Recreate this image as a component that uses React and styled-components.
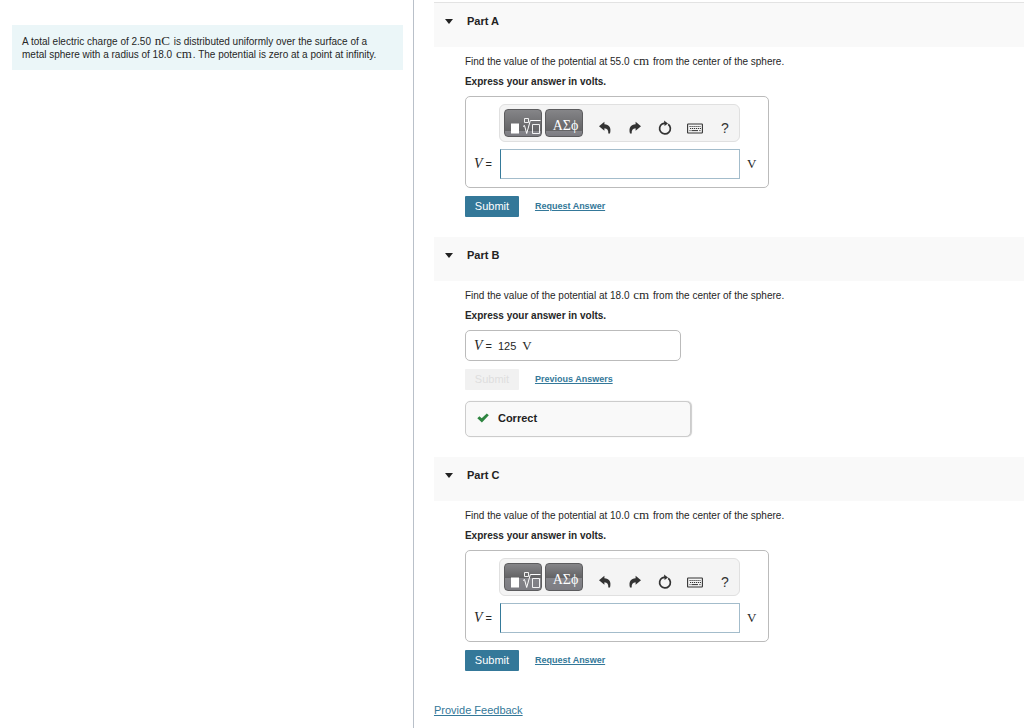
import React from "react";
import styled, { createGlobalStyle } from "styled-components";

const Global = createGlobalStyle`
  *, *::before, *::after { box-sizing: border-box; }
  body { margin: 0; background: #fff; color: #262626; font: 10px/12px "Liberation Sans", Arial, sans-serif; }
  p, h2 { margin: 0; }
  button, input { font-family: inherit; }
`;

const Page = styled.div`
  display: grid;
  grid-template-columns: 19fr 28fr;
  min-height: 100vh;
`;
const Aside = styled.aside`
  padding: 25px 10px 0 12px;
  border-right: 1px solid #b9c0c9;
`;
const Problem = styled.div`
  background: #ebf6f8;
  padding: 10px 20px 9px 10px;
  line-height: 13px;
`;
const Main = styled.main`
  padding: 2px 0 0 20px;
`;
const Header = styled.header`
  display: flex;
  align-items: flex-start;
  height: ${(p) => (p.$first ? 45 : 44)}px;
  padding-top: 11px;
  background: #f9f9f9;
  border-top: ${(p) => (p.$first ? "1px solid #e3e3e3" : "0")};
`;
const Toggle = styled.button`
  display: flex;
  align-items: center;
  gap: 14px;
  padding: 0 0 0 11px;
  border: 0;
  background: none;
  color: #222;
  font-size: 11px;
  font-weight: 700;
  line-height: 14px;
`;
const Body = styled.div`
  padding: 9px 20px 20px 31px;
`;
const Question = styled.p`
  line-height: 12px;
`;
const Instruction = styled.p`
  margin: 8px 0;
  font-weight: 700;
  line-height: 12px;
`;
const Math = styled.span`
  font-family: "Liberation Serif", "Times New Roman", serif;
  font-size: ${(p) => (p.$large ? 14 : 13)}px;
  line-height: 0;
  font-style: ${(p) => (p.$italic ? "italic" : "normal")};
`;
const InlineUnit = styled(Math)`
  margin: 0 1px;
`;
const Box = styled.div`
  max-width: ${(p) => (p.$done ? 216 : 304)}px;
  border: 1px solid #bbb;
  border-radius: 5px;
  padding: ${(p) => (p.$done ? "8px" : "7px 8px 8px")};
`;
const Tools = styled.div`
  display: flex;
  align-items: center;
  height: 38px;
  margin: 0 20px 7px 25px;
  padding: 0 4px;
  gap: 3px;
  background: #f4f4f4;
  border: 1px solid #e0e0e0;
  border-radius: 6px;
`;
const Template = styled.button`
  flex: none;
  width: 38px;
  height: 28px;
  padding: 0;
  border: 1px solid #5c5c5e;
  border-radius: 4px;
  background: linear-gradient(#858588, #636365 ${(p) => p.$band}%, #85858a ${(p) => p.$band}%, #7c7c82);
  color: #fff;
  svg { display: block; }
`;
const Greek = styled.span`
  display: block;
  padding: 6px 0 0 3px;
  font: 14px/18px "Liberation Serif", serif;
`;
const Icons = styled.div`
  display: flex;
  flex: 1;
  gap: 10px;
  padding: 10px 0 0 9px;
`;
const Tool = styled.button`
  display: grid;
  place-items: center;
  flex: none;
  width: 20px;
  height: 20px;
  padding: 0;
  border: 0;
  background: none;
  color: #333;
  font-size: 14px;
  line-height: 20px;
`;
const Field = styled.div`
  display: flex;
  align-items: center;
`;
const Label = styled.label`
  width: 26px;
  font-size: 11px;
  white-space: nowrap;
`;
const Input = styled.input`
  flex: 1;
  min-width: 0;
  height: 30px;
  margin-right: 7px;
  padding: 0 6px;
  border: 1px solid #a3bccb;
  border-left-color: #357a9a;
  font-size: 12px;
`;
const Unit = styled(Math)`
  width: 13px;
`;
const Result = styled.div`
  display: flex;
  align-items: center;
  gap: 6px;
  height: 13px;
  font-size: 11px;
`;
const Actions = styled.div`
  display: flex;
  align-items: center;
  gap: 16px;
  margin-top: 8px;
`;
const Submit = styled.button`
  width: 54px;
  height: 21px;
  padding: 0 0 2px;
  border: 0;
  border-radius: 1px;
  background: #347899;
  color: #fff;
  font-size: 11px;
  &:disabled { background: #f1f1f1; color: #dedede; }
`;
const Link = styled.a`
  padding-bottom: 2px;
  color: #347899;
  font-weight: 700;
  font-size: 9px;
`;
const Feedback = styled.a`
  display: inline-block;
  margin-top: 12px;
  color: #347899;
  font-size: 11px;
  line-height: 14px;
`;
const Correct = styled.div`
  display: flex;
  align-items: center;
  gap: 9px;
  max-width: 226px;
  height: 36px;
  margin-top: 11px;
  padding: 0 0 2px 11px;
  border: 1px solid #ccc;
  border-radius: 5px;
  background: #f9f9f9;
  box-shadow: 1px 0 1px #ccc;
  color: #222;
  font-size: 11px;
  font-weight: 700;
`;

const Arrow = ({ flip }) => (
  <svg width="14" height="14" viewBox="0 0 14 14" fill="currentColor" aria-hidden="true">
    <path transform={flip ? "translate(14 0) scale(-1 1)" : undefined}
      d="M1 5.2 6.4.8v2.5C11 3.5 13.6 6.5 12 12.6H10.3C10.6 9.2 9.4 7.3 6.4 7.2v2.6Z" />
  </svg>
);
const Reset = () => (
  <svg width="14" height="16" viewBox="0 0 14 16" aria-hidden="true">
    <path d="M10.2 4.2A5.4 5.4 0 1 1 4.4 3.8L7 3.2" fill="none" stroke="currentColor" strokeWidth="1.7" />
    <path d="M6 .6 10 3.4 6.6 6Z" fill="currentColor" />
  </svg>
);
const Keyboard = () => (
  <svg width="16" height="12" viewBox="0 0 16 12" fill="none" stroke="currentColor" aria-hidden="true">
    <rect x=".6" y="2" width="14.8" height="9" rx=".6" strokeWidth="1.1" />
    <path d="M2.5 4.5h11M3 6.5h11" strokeDasharray="1.2 .8" />
    <path d="M2.5 8.6h1M4.5 8.6h6.5M12.3 8.6h1.2" />
  </svg>
);
const RootIcon = () => (
  <svg width="36" height="26" viewBox="0 0 36 26" fill="none" stroke="#fff" aria-hidden="true">
    <path d="M6 13.5h8v10H6Z" fill="#fff" stroke="none" />
    <path d="M19.5 8.5h4v4h-4ZM27.5 14.5h7v9h-7Z" strokeWidth=".9" />
    <path d="m18 16.5 1.5-1 2.2 8L25.3 10.5H35.5" />
  </svg>
);

const Editor = ({ id, band }) => (
  <Box>
    <Tools>
      <Template type="button" $band={band} aria-label="Templates"><RootIcon /></Template>
      <Template type="button" $band={band}><Greek>ΑΣϕ</Greek></Template>
      <Icons>
        <Tool type="button" aria-label="Undo"><Arrow /></Tool>
        <Tool type="button" aria-label="Redo"><Arrow flip /></Tool>
        <Tool type="button" aria-label="Reset"><Reset /></Tool>
        <Tool type="button" aria-label="Keyboard"><Keyboard /></Tool>
        <Tool type="button">?</Tool>
      </Icons>
    </Tools>
    <Field>
      <Label htmlFor={id}><Math $italic $large>V</Math> =</Label>
      <Input id={id} type="text" />
      <Unit>V</Unit>
    </Field>
  </Box>
);

const Part = ({ name, distance, answer, first }) => (
  <section>
    <Header $first={first}>
      <h2>
        <Toggle type="button" aria-expanded="true">
          <svg width="8" height="5" viewBox="0 0 8 5" aria-hidden="true"><path d="M0 0h8L4 5Z" fill="#222" /></svg>
          Part {name}
        </Toggle>
      </h2>
    </Header>
    <Body>
      <Question>
        Find the value of the potential at {distance} <InlineUnit>cm</InlineUnit> from the center of the sphere.
      </Question>
      <Instruction>Express your answer in volts.</Instruction>
      {answer ? (
        <Box $done>
          <Result><span><Math $italic $large>V</Math> =</span><span>{answer}</span><Math>V</Math></Result>
        </Box>
      ) : (
        <Editor id={`answer-${name}`} band={first ? 82 : 52} />
      )}
      <Actions>
        <Submit type="button" disabled={Boolean(answer)}>Submit</Submit>
        <Link href="#">{answer ? "Previous Answers" : "Request Answer"}</Link>
      </Actions>
      {answer && (
        <Correct>
          <svg width="12" height="10" viewBox="0 0 12 10" aria-hidden="true">
            <path d="M.3 5.2 2.4 3.2 4.7 5.3 9.8.4 11.8 2.2 4.9 9.4Z" fill="#2e8540" />
          </svg>
          Correct
        </Correct>
      )}
    </Body>
  </section>
);

export default function App() {
  return (
    <>
      <Global />
      <Page>
        <Aside>
          <Problem>
            A total electric charge of 2.50 <InlineUnit>nC</InlineUnit> is distributed uniformly over the surface of a
            metal sphere with a radius of 18.0 <InlineUnit>cm</InlineUnit>. The potential is zero at a point at infinity.
          </Problem>
        </Aside>
        <Main>
          <Part name="A" distance="55.0" first />
          <Part name="B" distance="18.0" answer="125" />
          <Part name="C" distance="10.0" />
          <Feedback href="#">Provide Feedback</Feedback>
        </Main>
      </Page>
    </>
  );
}
